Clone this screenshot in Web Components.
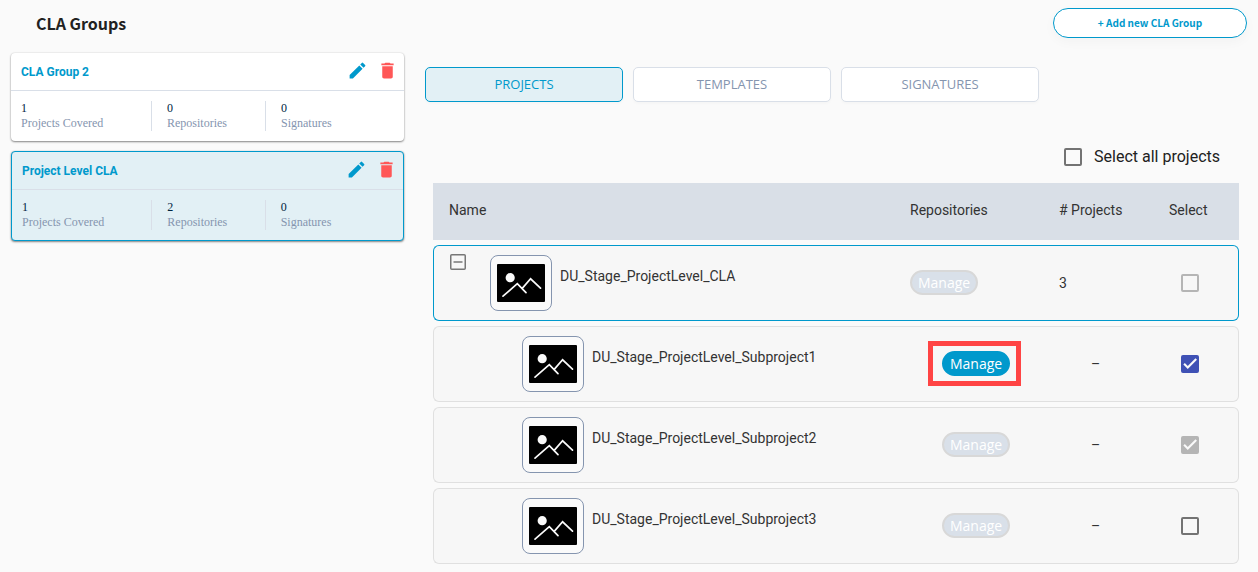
<!DOCTYPE html>
<html lang="en">
<head>
<meta charset="utf-8">
<meta name="viewport" content="width=device-width, initial-scale=1">
<title>CLA Groups</title>
<style>
  :root {
    --blue: #0099cc;
    --tint: #e2f0f5;
    --line: #d9dfe8;
    --muted: #8595af;
    --danger: #ff5757;
  }
  body { margin: 0; background: #fafafa; color: #212121; font-family: Roboto, sans-serif; }
</style>
</head>
<body>
<cla-page></cla-page>
<script>
const define = (name, html, setup) => {
  const template = document.createElement('template');
  template.innerHTML = html;
  customElements.define(name, class extends HTMLElement {
    constructor() {
      super();
      this.attachShadow({ mode: 'open' }).append(template.content.cloneNode(true));
    }
    connectedCallback() {
      if (setup) setup(this, this.shadowRoot);
    }
  });
};

define('material-checkbox', `
  <style>
    :host { display: block; width: fit-content; }
    label { display: flex; align-items: center; gap: 12px; font-size: 16px; line-height: 24px; }
    .box { position: relative; display: block; width: 18px; height: 18px; }
    input { appearance: none; display: block; box-sizing: border-box; width: 18px; height: 18px; margin: 0; border: 2px solid #737373; border-radius: 2px; }
    input:checked { background: #3f51b5; border-color: #3f51b5; }
    input:disabled { border-color: #b5b5b5; }
    input:disabled:checked { background: #b5b5b5; }
    svg { position: absolute; inset: 0; display: none; pointer-events: none; }
    input:checked + svg { display: block; }
  </style>
  <label>
    <span class="box"><input type="checkbox"><svg width="18" height="18" viewBox="0 0 24 24" fill="none" stroke="#fafafa" stroke-width="2.8"><path d="M4.1 11.7 9 16.6 20.3 5.3"/></svg></span>
    <slot></slot>
  </label>`,
  (host, root) => {
    const input = root.querySelector('input');
    input.checked = host.hasAttribute('checked');
    input.disabled = host.hasAttribute('disabled');
    if (host.hasAttribute('label')) input.setAttribute('aria-label', host.getAttribute('label'));
  });

define('manage-button', `
  <style>
    :host { display: block; position: relative; width: fit-content; }
    button { display: block; box-sizing: border-box; height: 25px; padding: 0 6px; border: 2px solid var(--blue); border-radius: 13px; background: var(--blue); color: #fff; font: 500 14px/21px "Open Sans", sans-serif; }
    button:disabled { border-color: #d8d8d8; background: #d9e0e9; color: #fff; }
    .mark { display: none; position: absolute; inset: -10px -11px -10px -14px; border: 5px solid #ff4444; pointer-events: none; }
    :host([highlighted]) .mark { display: block; }
  </style>
  <button type="button"><slot></slot></button><span class="mark"></span>`,
  (host, root) => { root.querySelector('button').disabled = host.hasAttribute('disabled'); });

define('project-thumb', `
  <style>
    :host { display: block; box-sizing: border-box; flex: none; width: 62px; height: 56px; padding: 8px 6px; border: 1px solid #8595af; border-radius: 8px; background: #fafafa; }
    svg { display: block; }
  </style>
  <svg width="48" height="38" viewBox="0 0 48 38" aria-hidden="true">
    <rect width="48" height="38" rx="1" fill="#000"/>
    <circle cx="13.2" cy="13.7" r="4.6" fill="#fafafa"/>
    <path d="M6 32.2 20.3 19.6 29 28.6M25 24.6 33.6 14.8 43.5 24.2" fill="none" stroke="#fafafa" stroke-width="1.7" stroke-linecap="round"/>
  </svg>`);

define('group-card', `
  <style>
    :host { display: block; border-radius: 4px; background: #fff; box-shadow: 0 1px 2px rgba(0,0,0,.45), 0 0 2px rgba(0,0,0,.12); }
    :host([selected]) { border: 1px solid var(--blue); background: var(--tint); }
    header { display: flex; align-items: center; gap: 9px; box-sizing: border-box; height: 38px; padding: 0 6px 0 10px; border-bottom: 1px solid var(--line); }
    h2 { flex: 1; margin: 0; font-size: 12px; line-height: 16px; font-weight: 700; color: var(--blue); }
    button { display: flex; align-items: flex-start; height: 24px; padding: 0; border: 0; background: none; color: var(--blue); }
    .delete { color: var(--danger); }
    svg { display: block; }
    .stats { padding: 10px; }
    ::slotted(group-stats) { display: block; }
  </style>
  <header>
    <h2><slot name="title"></slot></h2>
    <button type="button" aria-label="Edit"><svg width="21" height="21" viewBox="0 0 24 24" fill="currentColor"><path d="M3 17.25V21h3.75L17.81 9.94l-3.75-3.75L3 17.25zM20.71 7.04a1 1 0 0 0 0-1.41l-2.34-2.34a1 1 0 0 0-1.41 0l-1.83 1.83 3.75 3.75 1.83-1.83z"/></svg></button>
    <button type="button" class="delete" aria-label="Delete"><svg width="21" height="21" viewBox="0 0 24 24" fill="currentColor"><path d="M6 19c0 1.1.9 2 2 2h8c1.1 0 2-.9 2-2V7H6v12zM19 4h-3.500l-1-1h-5l-1 1H5v2h14V4z"/></svg></button>
  </header>
  <div class="stats"><slot></slot></div>`);

define('group-stats', `
  <style>
    dl { display: grid; grid-template-columns: 130fr 114fr 129fr; margin: 0; font: 12px/15px "Liberation Serif", serif; }
    div { display: flex; flex-direction: column-reverse; height: 30px; }
    div + div { padding-left: 15px; border-left: 1px solid var(--line); }
    dt { color: var(--muted); }
    dd { margin: 0; color: #00243f; }
  </style>
  <dl>
    <div><dt>Projects Covered</dt><dd data-stat="projects"></dd></div>
    <div><dt>Repositories</dt><dd data-stat="repositories"></dd></div>
    <div><dt>Signatures</dt><dd data-stat="signatures"></dd></div>
  </dl>`,
  (host, root) => root.querySelectorAll('dd').forEach(dd => { dd.textContent = host.getAttribute(dd.dataset.stat); }));

define('section-tabs', `
  <style>
    :host { display: flex; gap: 10px; }
    button { box-sizing: border-box; flex: 0 1 198px; height: 35px; padding: 0 0 2px; border: 1px solid var(--line); border-radius: 5px; background: #fff; color: var(--muted); font: 13px/20px "Open Sans", sans-serif; box-shadow: 0 2px 3px rgba(0,0,0,.02); }
    [aria-selected="true"] { border-color: var(--blue); background: var(--tint); color: var(--blue); }
  </style>
  <button type="button" role="tab" aria-selected="true">PROJECTS</button>
  <button type="button" role="tab" aria-selected="false">TEMPLATES</button>
  <button type="button" role="tab" aria-selected="false">SIGNATURES</button>`,
  host => host.setAttribute('role', 'tablist'));

define('project-table', `
  <style>
    :host { display: block; }
    table { width: 100%; table-layout: fixed; border-collapse: separate; border-spacing: 0 5px; font-size: 14px; line-height: 20px; }
    col.repos { width: 149px; }
    col.count { width: 110px; }
    col.select { width: 86px; }
    th { height: 57px; padding: 0 0 3px 16px; box-sizing: border-box; background: #d9dfe7; text-align: left; font-weight: 400; color: #333; }
    td { box-sizing: border-box; height: 76px; padding: 0 0 1px 16px; border: solid #e0e0e0; border-width: 1px 0; background: #f7f7f7; color: #333; }
    td:first-child { padding-bottom: 0; border-left-width: 1px; border-radius: 6px 0 0 6px; }
    td:last-child { border-right-width: 1px; border-radius: 0 6px 6px 0; padding-left: 28px; }
    .parent td { border-color: var(--blue); }
    .child td:nth-child(2), .child td:nth-child(3) { padding-left: 48px; }
    .name { display: flex; gap: 8px; height: 56px; }
    .toggle { display: flex; align-items: flex-start; flex: none; width: 32px; height: 16px; margin: 0; padding: 0; border: 0; background: none; color: #777; }
    .toggle svg { display: block; }
    .child .name { padding-left: 72px; }
    .text { padding-top: 11px; }
  </style>
  <table>
    <colgroup><col><col class="repos"><col class="count"><col class="select"></colgroup>
    <thead><tr><th scope="col">Name</th><th scope="col">Repositories</th><th scope="col"># Projects</th><th scope="col">Select</th></tr></thead>
    <tbody>
      <tr class="parent">
        <td><div class="name"><button class="toggle" type="button" aria-label="Collapse"><svg width="16" height="16" viewBox="0 1 16 16" fill="none" stroke="currentColor" stroke-width="1.500" overflow="visible"><rect x=".75" y=".75" width="14.500" height="14.500" rx="1"/><path d="M3.500 8h9"/></svg></button><project-thumb></project-thumb><span class="text">DU_Stage_ProjectLevel_CLA</span></div></td>
        <td><manage-button disabled>Manage</manage-button></td><td>3</td>
        <td><material-checkbox disabled label="Select DU_Stage_ProjectLevel_CLA"></material-checkbox></td>
      </tr>
      <tr class="child">
        <td><div class="name"><project-thumb></project-thumb><span class="text">DU_Stage_ProjectLevel_Subproject1</span></div></td>
        <td><manage-button highlighted>Manage</manage-button></td><td>–</td>
        <td><material-checkbox checked label="Select DU_Stage_ProjectLevel_Subproject1"></material-checkbox></td>
      </tr>
      <tr class="child">
        <td><div class="name"><project-thumb></project-thumb><span class="text">DU_Stage_ProjectLevel_Subproject2</span></div></td>
        <td><manage-button disabled>Manage</manage-button></td><td>–</td>
        <td><material-checkbox checked disabled label="Select DU_Stage_ProjectLevel_Subproject2"></material-checkbox></td>
      </tr>
      <tr class="child">
        <td><div class="name"><project-thumb></project-thumb><span class="text">DU_Stage_ProjectLevel_Subproject3</span></div></td>
        <td><manage-button disabled>Manage</manage-button></td><td>–</td>
        <td><material-checkbox label="Select DU_Stage_ProjectLevel_Subproject3"></material-checkbox></td>
      </tr>
    </tbody>
  </table>`);

define('cla-page', `
  <style>
    :host { display: block; padding: 8px 11px 0; }
    .top { display: flex; align-items: center; justify-content: space-between; height: 30px; padding-left: 25px; }
    h1 { margin: 0; font: 700 16px/24px "Noto Sans CJK SC", sans-serif; color: #212121; }
    .add { box-sizing: border-box; width: 194px; height: 30px; padding: 0; border: 1px solid var(--blue); border-radius: 15px; background: #fff; color: var(--blue); font: 700 10px/16px "Noto Sans CJK SC", sans-serif; box-shadow: 0 4px 12px rgba(0,0,0,.03); }
    main { display: grid; grid-template-columns: 393fr 822fr; gap: 21px; padding-top: 15px; }
    .groups { display: flex; flex-direction: column; gap: 10px; }
    .detail { min-width: 0; padding-top: 14px; }
    .all { display: flex; justify-content: flex-end; padding: 43px 27px 9px; }
    project-table { margin: 0 8px; }
  </style>
  <div class="top"><h1>CLA Groups</h1><button class="add" type="button">+ Add new CLA Group</button></div>
  <main>
    <div class="groups">
      <group-card><span slot="title">CLA Group 2</span><group-stats projects="1" repositories="0" signatures="0"></group-stats></group-card>
      <group-card selected><span slot="title">Project Level CLA</span><group-stats projects="1" repositories="2" signatures="0"></group-stats></group-card>
    </div>
    <div class="detail">
      <section-tabs></section-tabs>
      <div class="all"><material-checkbox>Select all projects</material-checkbox></div>
      <project-table></project-table>
    </div>
  </main>`);
</script>
</body>
</html>
